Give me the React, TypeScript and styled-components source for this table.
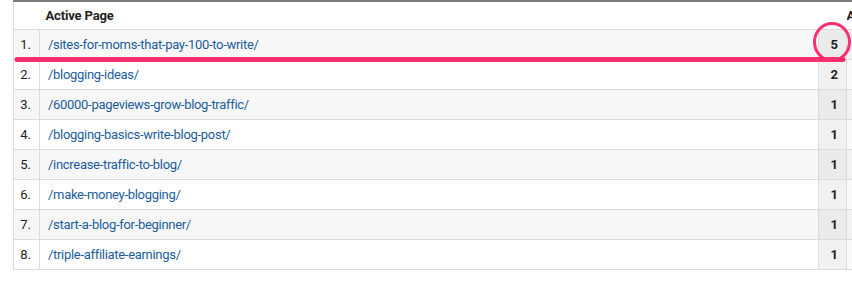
import React from "react";
import styled, { createGlobalStyle } from "styled-components";

const Global = createGlobalStyle`
  html, body { margin: 0; padding: 0; background: #fff; }
  body { font-family: Roboto, "Liberation Sans", Arial, sans-serif; }
`;

const Page = styled.div`
  width: 852px;
  height: 291px;
  overflow: hidden;
  padding-left: 13px;
  box-sizing: border-box;
  position: relative;
`;

const Table = styled.table`
  border-collapse: collapse;
  table-layout: fixed;
  width: 880px;
  font-size: 13px;
  color: #222;
  border-top: 2px solid #7a7a7a;
  border-left: 1px solid #dcdcdc;
`;

const HeadCell = styled.th<{ $align?: string }>`
  height: 27px;
  padding: 0 6px;
  font-weight: 700;
  letter-spacing: -0.15px;
  text-align: ${(p) => p.$align || "left"};
  color: #222;
  border-bottom: 1px solid #dcdcdc;
  white-space: nowrap;
  overflow: hidden;
`;

const Row = styled.tr<{ $odd: boolean }>`
  height: 30px;
  background: ${(p) => (p.$odd ? "#f7f7f7" : "#fff")};
  border-bottom: 1px solid #dcdcdc;
`;

const IndexCell = styled.td`
  text-align: right;
  padding: 0 8px 0 0;
  border-right: 1px solid #dcdcdc;
  color: #222;
`;

const PageCell = styled.td`
  padding: 0 8px;
  white-space: nowrap;
`;

const PageLink = styled.span`
  color: #1b5d9c;
  letter-spacing: -0.3px;
`;

const ValueCell = styled.td<{ $odd: boolean }>`
  text-align: right;
  padding: 0 8px 0 0;
  font-weight: 700;
  background: ${(p) => (p.$odd ? "#ebebeb" : "#f1f1f1")};
  border-left: 1px solid #dcdcdc;
  border-right: 1px solid #dcdcdc;
`;

const ExtraCell = styled.td<{ $odd: boolean }>`
  background: ${(p) => (p.$odd ? "#f2f2f2" : "#fafafa")};
`;

const Overlay = styled.svg`
  position: absolute;
  left: 0;
  top: 0;
  pointer-events: none;
`;

const rows = [
  { page: "/sites-for-moms-that-pay-100-to-write/", value: 5 },
  { page: "/blogging-ideas/", value: 2 },
  { page: "/60000-pageviews-grow-blog-traffic/", value: 1 },
  { page: "/blogging-basics-write-blog-post/", value: 1 },
  { page: "/increase-traffic-to-blog/", value: 1 },
  { page: "/make-money-blogging/", value: 1 },
  { page: "/start-a-blog-for-beginner/", value: 1 },
  { page: "/triple-affiliate-earnings/", value: 1 },
];

export default function App() {
  return (
    <>
      <Global />
      <Page>
        <Table>
          <colgroup>
            <col style={{ width: 26 }} />
            <col style={{ width: 779 }} />
            <col style={{ width: 28 }} />
            <col style={{ width: 47 }} />
          </colgroup>
          <thead>
            <tr>
              <HeadCell />
              <HeadCell>Active Page</HeadCell>
              <HeadCell />
              <HeadCell style={{ paddingLeft: 0 }}>A</HeadCell>
            </tr>
          </thead>
          <tbody>
            {rows.map((r, i) => {
              const odd = i % 2 === 0;
              return (
                <Row key={r.page} $odd={odd}>
                  <IndexCell>{i + 1}.</IndexCell>
                  <PageCell>
                    <PageLink>{r.page}</PageLink>
                  </PageCell>
                  <ValueCell $odd={odd}>{r.value}</ValueCell>
                  <ExtraCell $odd={odd} />
                </Row>
              );
            })}
          </tbody>
        </Table>
        <Overlay width="852" height="291" viewBox="0 0 852 291">
          <line
            x1="17"
            y1="59.5"
            x2="843"
            y2="59.5"
            stroke="#ff2e6e"
            strokeWidth="5"
            strokeLinecap="round"
          />
          <ellipse
            cx="832"
            cy="42"
            rx="17.5"
            ry="18.5"
            fill="none"
            stroke="#ff2e6e"
            strokeWidth="3"
          />
        </Overlay>
      </Page>
    </>
  );
}
